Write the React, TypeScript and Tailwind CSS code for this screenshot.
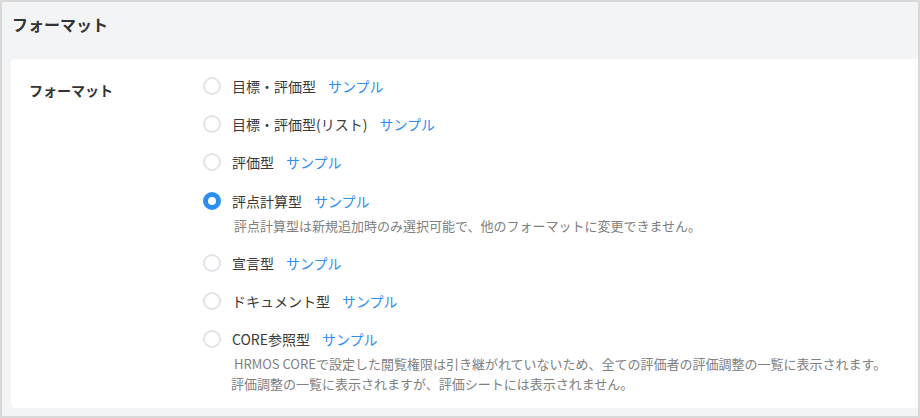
const formats = [
  { label: "目標・評価型" },
  { label: "目標・評価型(リスト)" },
  { label: "評価型" },
  {
    label: "評点計算型",
    checked: true,
    notes: [" 評点計算型は新規追加時のみ選択可能で、他のフォーマットに変更できません。"],
  },
  { label: "宣言型" },
  { label: "ドキュメント型" },
  {
    label: "CORE参照型",
    notes: [
      " HRMOS COREで設定した閲覧権限は引き継がれていないため、全ての評価者の評価調整の一覧に表示されます。",
      "評価調整の一覧に表示されますが、評価シートには表示されません。",
    ],
  },
];

function Radio({ checked }: { checked?: boolean }) {
  return checked ? (
    <span className="w-[18px] h-[18px] rounded-full border-[5px] border-[#2b8ef2] bg-white shrink-0" />
  ) : (
    <span className="w-[18px] h-[18px] rounded-full border-2 border-[#e1e4e9] bg-white shrink-0" />
  );
}

export default function App() {
  return (
    <div
      className="w-[920px] h-[418px] border-2 border-[#d9d9d9] bg-[#f3f4f6] text-[#333] overflow-hidden"
      style={{ fontFamily: '"Noto Sans CJK JP", "Noto Sans", sans-serif' }}
    >
      {/* Section header */}
      <div className="h-[57px] pl-[10px] pt-[10px]">
        <h2 className="text-[16px] leading-[24px] font-bold">フォーマット</h2>
      </div>

      {/* Card */}
      <div className="ml-[9px] bg-white rounded-l-[4px] pl-[18px] pt-4 pb-[14px] flex">
        <div className="w-[174px] shrink-0 pt-[4px] text-[14px] leading-[22px] font-bold">
          フォーマット
        </div>
        <div className="flex flex-col gap-[16.2px]">
          {formats.map((f) => (
            <div key={f.label}>
              <label className="flex items-center h-[22px]">
                <Radio checked={f.checked} />
                <span className="ml-[11px] text-[14px] leading-[22px] font-normal text-[#3a3a3a]">
                  {f.label}
                </span>
                <a className="ml-[12px] text-[14px] leading-[22px] text-[#2f8ef0]">サンプル</a>
              </label>
              {f.notes && (
                <div className="mt-1 pl-[28px] text-[13px] leading-[20px] text-[#808080] whitespace-pre">
                  {f.notes.map((n) => (
                    <div key={n}>{n}</div>
                  ))}
                </div>
              )}
            </div>
          ))}
        </div>
      </div>
    </div>
  );
}
